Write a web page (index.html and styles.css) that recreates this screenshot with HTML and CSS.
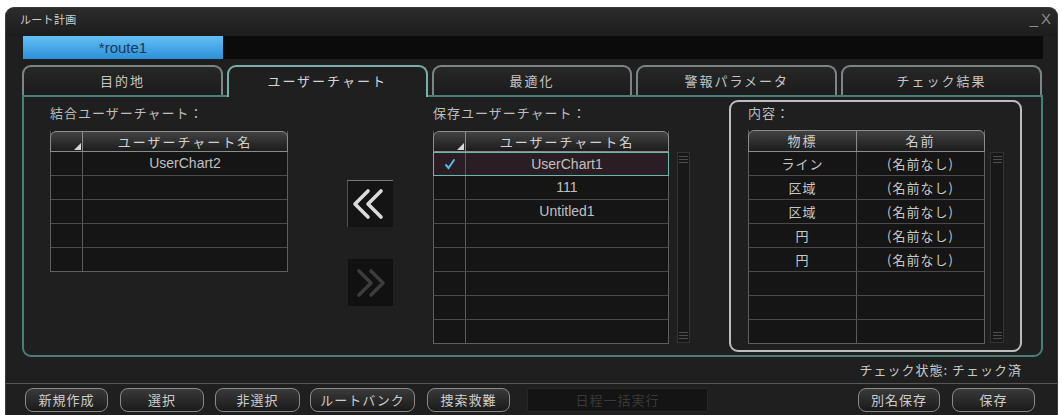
FILE: index.html
```html
<!DOCTYPE html>
<html lang="ja">
<head>
<meta charset="utf-8">
<title>ルート計画</title>
<link rel="stylesheet" href="styles.css">
</head>
<body>
<div class="window">
  <div class="titlebar">
    <span class="title">ルート計画</span>
    <span class="winctl"><span class="min">_</span><span class="close">X</span></span>
  </div>
  <div class="routebar"><div class="routetab">*route1</div></div>
  <div class="tabs">
    <div class="tab">目的地</div>
    <div class="tab active">ユーザーチャート</div>
    <div class="tab">最適化</div>
    <div class="tab">警報パラメータ</div>
    <div class="tab">チェック結果</div>
  </div>
  <div class="panel">
    <div class="col col-left">
      <div class="label">結合ユーザーチャート：</div>
      <div class="grid">
        <div class="row head"><div class="c c1 corner"><span class="tri"></span></div><div class="c c2">ユーザーチャート名</div></div>
        <div class="row"><div class="c c1"></div><div class="c c2 en">UserChart2</div></div>
        <div class="row"><div class="c c1"></div><div class="c c2"></div></div>
        <div class="row"><div class="c c1"></div><div class="c c2"></div></div>
        <div class="row"><div class="c c1"></div><div class="c c2"></div></div>
        <div class="row"><div class="c c1"></div><div class="c c2"></div></div>
      </div>
    </div>
    <div class="arrows">
      <div class="arrowbtn">
        <svg width="46" height="47" viewBox="0 0 46 47"><path d="M21 11 L8 24 L21 37 M34 11 L21 24 L34 37" fill="none" stroke="#dcdcdc" stroke-width="3.6" stroke-linecap="round" stroke-linejoin="round"/></svg>
      </div>
      <div class="arrowbtn disabled">
        <svg width="46" height="48" viewBox="0 0 46 48"><path d="M12 13 L24 25 L12 37 M24 13 L36 25 L24 37" fill="none" stroke="#3c3c3c" stroke-width="3.6" stroke-linecap="round" stroke-linejoin="round"/></svg>
      </div>
    </div>
    <div class="col col-mid">
      <div class="label">保存ユーザーチャート：</div>
      <div class="tablewrap">
        <div class="grid gmid">
          <div class="row head"><div class="c c1 corner"><span class="tri"></span></div><div class="c c2">ユーザーチャート名</div></div>
          <div class="row sel"><div class="c c1"><svg width="12" height="12" viewBox="0 0 12 12"><path d="M2 7 L4.5 10 L10 2" fill="none" stroke="#59b6ea" stroke-width="2" stroke-linecap="round"/></svg></div><div class="c c2 en">UserChart1</div></div>
          <div class="row"><div class="c c1"></div><div class="c c2 en">111</div></div>
          <div class="row"><div class="c c1"></div><div class="c c2 en">Untitled1</div></div>
          <div class="row"><div class="c c1"></div><div class="c c2"></div></div>
          <div class="row"><div class="c c1"></div><div class="c c2"></div></div>
          <div class="row"><div class="c c1"></div><div class="c c2"></div></div>
          <div class="row"><div class="c c1"></div><div class="c c2"></div></div>
          <div class="row"><div class="c c1"></div><div class="c c2"></div></div>
        </div>
        <div class="scroll"><span class="grip"></span><span class="grip"></span></div>
      </div>
    </div>
    <div class="box">
      <div class="label">内容：</div>
      <div class="tablewrap">
        <div class="grid gright">
          <div class="row head"><div class="c r1">物標</div><div class="c r2">名前</div></div>
          <div class="row"><div class="c r1">ライン</div><div class="c r2">(名前なし)</div></div>
          <div class="row"><div class="c r1">区域</div><div class="c r2">(名前なし)</div></div>
          <div class="row"><div class="c r1">区域</div><div class="c r2">(名前なし)</div></div>
          <div class="row"><div class="c r1">円</div><div class="c r2">(名前なし)</div></div>
          <div class="row"><div class="c r1">円</div><div class="c r2">(名前なし)</div></div>
          <div class="row"><div class="c r1"></div><div class="c r2"></div></div>
          <div class="row"><div class="c r1"></div><div class="c r2"></div></div>
          <div class="row"><div class="c r1"></div><div class="c r2"></div></div>
        </div>
        <div class="scroll wide"><span class="grip"></span><span class="grip"></span></div>
      </div>
    </div>
  </div>
  <div class="status">チェック状態: チェック済</div>
  <div class="buttons">
    <div class="btn w83">新規作成</div>
    <div class="btn w84 g12">選択</div>
    <div class="btn w85 g11">非選択</div>
    <div class="btn w105 g10">ルートバンク</div>
    <div class="btn w83 g12">捜索救難</div>
    <div class="btn off">日程一括実行</div>
    <div class="spacer"></div>
    <div class="btn w82">別名保存</div>
    <div class="btn w83 g12">保存</div>
  </div>
</div>
</body>
</html>
```

FILE: styles.css
```css
* { box-sizing: border-box; }
html, body { margin: 0; padding: 0; }
body {
  background: #ffffff;
  font-family: "Noto Sans CJK JP", "Noto Sans", sans-serif;
  color: #c8c8c8;
  font-size: 13px;
  width: 1062px;
  height: 415px;
  overflow: hidden;
}
.window {
  margin: 7px 0 0 5px;
  width: 1053px;
  height: 408px;
  background: #1f1f1f;
  border-radius: 9px 9px 0 0;
  border: 1px solid #3a3a3a;
  border-bottom: none;
  display: flex;
  flex-direction: column;
  overflow: hidden;
}
.titlebar {
  height: 28px;
  flex: none;
  display: flex;
  align-items: center;
  justify-content: space-between;
  padding: 0 6px 0 14px;
  background: linear-gradient(#2c2c2c, #1c1c1c);
}
.title { font-size: 11px; color: #d0d0d0; letter-spacing: 0.3px; line-height: 14px; margin-top: -6px; }
.winctl { display: flex; gap: 3px; font-family: "Liberation Sans", sans-serif; color: #8a8a8a; font-size: 15px; margin-top: -8px; }
.routebar {
  height: 23px;
  flex: none;
  margin: 0 14px 0 17px;
  background: #0b0b0b;
  display: flex;
}
.routetab {
  width: 200px;
  background: linear-gradient(#63c0f4, #2c8fd8);
  color: #173a58;
  font-family: "Liberation Sans", sans-serif;
  font-size: 15px;
  text-align: center;
  line-height: 23px;
}
.tabs {
  flex: none;
  height: 30px;
  margin: 6px 15px 0 16px;
  display: flex;
  gap: 4px;
  position: relative;
  z-index: 1;
}
.tab {
  flex: 1;
  height: 30px;
  border: 2px solid #7c8585;
  border-bottom: none;
  border-radius: 9px 9px 0 0;
  background: linear-gradient(#272727, #1b1b1b);
  text-align: center;
  line-height: 27px;
  letter-spacing: 2px;
  color: #c4c4c4;
}
.tab.active {
  height: 32px;
  margin-bottom: -2px;
  background: #1f1f1f;
  border-color: #79afa8;
  color: #d4d4d4;
}
.panel {
  flex: none;
  height: 262px;
  margin: 0 14px 0 16px;
  border: 2px solid #4a7f79;
  border-radius: 0 0 9px 9px;
  display: flex;
  padding-left: 26px;
}
.label { font-size: 13px; line-height: 18px; letter-spacing: 1px; color: #bdbdbd; }
.col { padding-top: 7px; }
.col .label { margin-bottom: 9px; }
.col-left { width: 238px; }
.arrows { width: 46px; margin-left: 59px; padding-top: 83px; display: flex; flex-direction: column; gap: 31px; }
.arrowbtn { width: 46px; height: 47px; background: #141414; border-top: 1px solid #7a7a7a; border-left: 1px solid #505050; }
.arrowbtn svg { display: block; margin-top: -1px; margin-left: -1px; }
.arrowbtn.disabled { height: 48px; background: #111111; border-color: #1e1e1e; }
.col-mid { width: 257px; margin-left: 40px; }
.tablewrap { display: flex; align-items: flex-start; }
.grid { width: 238px; border: 1px solid #5e5e5e; border-top: none; background: #151515; }
.gmid { width: 236px; }
.row { display: flex; height: 24px; border-bottom: 1px solid #4a4a4a; }
.row:last-child { border-bottom: none; height: 23px; }
.c { line-height: 23px; text-align: center; white-space: nowrap; overflow: hidden; }
.c1 { width: 32px; flex: none; border-right: 1px solid #5a5a5a; display: flex; align-items: center; justify-content: center; }
.c2 { flex: 1; letter-spacing: 1px; }
.en { font-family: "Liberation Sans", sans-serif; font-size: 14px; letter-spacing: 0; color: #c0c0c0; }
.row.head {
  height: 21px;
  border: 1px solid #8c8c8c;
  border-radius: 6px 6px 0 0;
  margin: 0 -1px;
  background: linear-gradient(#424242, #1c1c1c);
  color: #d0d0d0;
}
.row.head .c { line-height: 19px; letter-spacing: 2px; }
.row.head .c1, .row.head .r1 { border-right: 1px solid #8c8c8c; }
.corner { position: relative; }
.tri {
  position: absolute;
  right: 1px;
  bottom: 1px;
  width: 0;
  height: 0;
  border-left: 7px solid transparent;
  border-bottom: 7px solid #d8d8d8;
}
.row.sel { border: 1px solid #67b8ad; margin: 0 -1px; background: #2a1e24; }
.scroll {
  width: 13px;
  height: 191px;
  margin-left: 8px;
  margin-top: 21px;
  border: 1px solid #333;
  background: #181818;
  display: flex;
  flex-direction: column;
  justify-content: space-between;
  align-items: center;
  padding: 3px 0;
}
.scroll.wide { width: 14px; margin-left: 5px; margin-top: 22px; }
.grip { width: 9px; height: 7px; border-top: 1px solid #4e4e4e; border-bottom: 1px solid #4e4e4e; background: linear-gradient(transparent 2px, #4e4e4e 2px, #4e4e4e 3px, transparent 3px); }
.box {
  width: 293px;
  height: 252px;
  margin-left: 39px;
  margin-top: 3px;
  border: 2px solid #bdbdbd;
  border-radius: 9px;
  padding: 3px 0 0 17px;
}
.box .label { line-height: 16px; margin-bottom: 9px; }
.gright { width: 237px; }
.gright .row.head { height: 22px; }
.gright .row.head .c { line-height: 20px; }
.r1 { width: 108px; flex: none; border-right: 1px solid #5a5a5a; letter-spacing: 1px; }
.r2 { flex: 1; letter-spacing: 1px; }
.status {
  flex: none;
  height: 26px;
  line-height: 26px;
  text-align: right;
  padding-right: 35px;
  letter-spacing: 1px;
  color: #c8c8c8;
}
.buttons {
  flex: none;
  border-top: 1px solid #575757;
  padding: 4px 22px 0 19px;
  display: flex;
}
.btn {
  height: 24px;
  border: 1px solid #8a8a8a;
  border-radius: 8px;
  background: linear-gradient(#3a3a3a, #1a1a1a);
  text-align: center;
  line-height: 22px;
  letter-spacing: 1px;
  color: #cccccc;
  flex: none;
}
.w82 { width: 82px; }
.w83 { width: 83px; }
.w84 { width: 84px; }
.w85 { width: 85px; }
.w105 { width: 105px; }
.g10 { margin-left: 10px; }
.g11 { margin-left: 11px; }
.g12 { margin-left: 12px; }
.btn.off {
  width: 181px;
  margin-left: 17px;
  border-radius: 2px;
  border-color: #262626;
  background: #141414;
  color: #3a3a3a;
}
.spacer { flex: 1; }
```
